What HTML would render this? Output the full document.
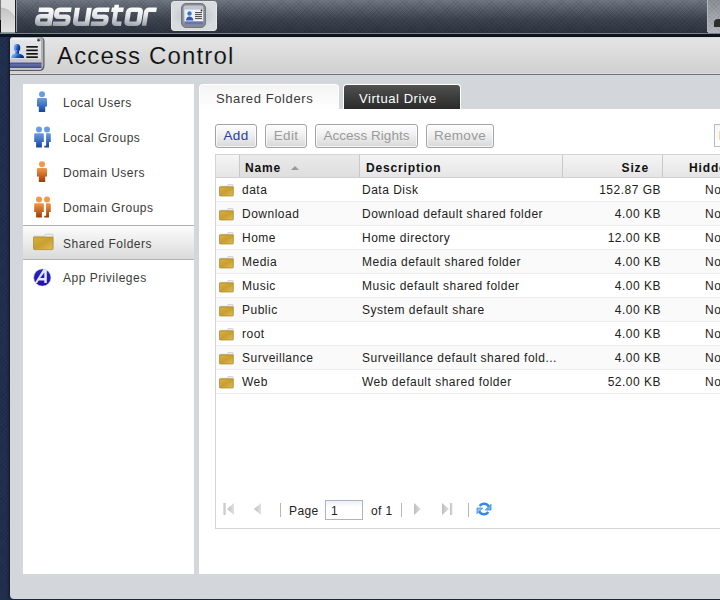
<!DOCTYPE html>
<html><head><meta charset="utf-8">
<style>
*{box-sizing:border-box;margin:0;padding:0}
html,body{width:720px;height:600px;overflow:hidden}
body{position:relative;font-family:"Liberation Sans",sans-serif;font-size:12px;color:#333;
 background:#223150;
 background-image:repeating-linear-gradient(45deg,rgba(0,0,0,.08) 0 1px,transparent 1px 3px),repeating-linear-gradient(-45deg,rgba(0,0,0,.08) 0 1px,transparent 1px 3px);}
.abs{position:absolute}
#topbar{left:0;top:0;width:720px;height:33px;
 background:linear-gradient(#737a86 0,#59606c 9px,#3f4652 19px,#2f3641 32px);}
#topbar:after{content:"";position:absolute;left:0;top:0;right:0;bottom:0;
 background-image:repeating-linear-gradient(45deg,rgba(0,0,0,.07) 0 1px,transparent 1px 3px),repeating-linear-gradient(-45deg,rgba(0,0,0,.07) 0 1px,transparent 1px 3px);}
#tbline{left:0;top:33px;width:720px;height:1px;background:#7b8089}
#tbdark{left:0;top:34px;width:720px;height:3px;background:#0e1522}
#win{left:10px;top:37px;width:720px;height:562px;background:#d3d6da;border-radius:4px 0 0 4px;box-shadow:-1px 0 3px rgba(0,0,0,.55)}
#hdr{left:10px;top:37px;width:710px;height:39px;background:linear-gradient(#d8d8d8,#e4e4e4 2px,#d0d0d0 36px,#dcdcdc 36px,#dcdcdc 37px,#727272 37px,#727272 38px,#d3d6da 38px);border-radius:4px 0 0 0}
#hdrline{left:10px;top:75px;width:710px;height:1px;background:#eef0f2}
#title{left:57px;top:42px;font-size:24px;color:#111;letter-spacing:1.15px;-webkit-text-stroke:0.15px #dadada}
#side{left:23px;top:84px;width:171px;height:490px;background:#fff}
.nav{position:absolute;left:0;width:171px;height:35px}
.nav span{position:absolute;left:40px;top:12px;font-size:12px;color:#3a3a3a;letter-spacing:0.5px}
.nav.sel{background:linear-gradient(#fbfbfb,#ececec 50%,#dadada);border-top:1px solid #b0b0b0;border-bottom:1px solid #b4b4b4}
#content{left:199px;top:84px;width:521px;height:490px;background:#fff}
#tabbar{left:199px;top:84px;width:521px;height:25px;background:#d3d6da}
#tab1{left:199px;top:84px;width:140px;height:26px;background:linear-gradient(#f4f4f4,#fff);border:1px solid #fff;border-bottom:none;border-radius:4px 4px 0 0}
#tab1 span{position:absolute;left:16px;top:6px;font-size:13px;color:#3a3a3a;letter-spacing:0.6px}
#tab2{left:343px;top:84px;width:118px;height:25px;background:linear-gradient(#505050,#2a2a2a);border:1px solid #fff;border-bottom:none;border-radius:4px 4px 0 0}
#tab2 span{position:absolute;left:15px;top:6px;font-size:13px;color:#fff;letter-spacing:0.55px}
.btn{position:absolute;top:124px;height:24px;border:1px solid #a4a4a4;border-radius:3px;background:linear-gradient(#fdfdfd,#f2f2f2 40%,#d8d8d8);font-size:13.5px;color:#9a9a9a;text-align:center;line-height:22px;letter-spacing:0.3px;box-shadow:inset 0 0 0 1px rgba(255,255,255,.7)}
#grid{left:215px;top:154px;width:520px;height:375px;border:1px solid #d4d4d4;background:#fff}
#ghead{left:216px;top:155px;width:520px;height:23px;background:linear-gradient(#f4f4f4,#e4e4e4);border-bottom:1px solid #d0d0d0}
.gh{position:absolute;top:0;height:21px;font-weight:bold;font-size:12px;color:#111;line-height:22px;letter-spacing:0.3px}
.row{position:absolute;left:216px;width:520px;height:24px;border-bottom:1px solid #ececec}
.row span{position:absolute;top:5px;font-size:12px;color:#222;letter-spacing:0.5px;white-space:nowrap}
.fold{position:absolute;left:3px;top:6px}

.gcol{position:absolute;top:0;height:22px;border-right:1px solid #c8c8c8;box-shadow:1px 0 0 #fafafa;background:linear-gradient(#f5f5f5,#e5e5e5)}
.gcol.sorted{background:linear-gradient(#e9e9e9,#dedede)}
.gcol b{position:absolute;top:0;line-height:26px;font-size:12px;color:#111;letter-spacing:0.85px;white-space:nowrap}
.sarrow{position:absolute;left:51px;top:11px;width:0;height:0;border-left:4px solid transparent;border-right:4px solid transparent;border-bottom:4px solid #999}
.row .c1{left:26px}
.row .c2{left:146px}
.row .c3{right:75px;text-align:right}
.row .c4{left:489px}
</style></head><body>
<div id="topbar" class="abs"></div>
<div class="abs" style="left:0;top:0;width:1px;height:32px;background:#222"></div>
<svg class="abs" style="left:0;top:0" width="16" height="33" viewBox="0 0 16 33">
 <defs><linearGradient id="tl" x1="0" y1="0" x2="0" y2="1"><stop offset="0" stop-color="#c4c4c4"/><stop offset="0.5" stop-color="#d4d4d4"/><stop offset="1" stop-color="#e2e2e2"/></linearGradient></defs>
 <rect x="0" y="0" width="1" height="20" fill="#7c7c7c"/>
 <rect x="1" y="0" width="14" height="32" fill="#e4e4e4"/>
 <path d="M1 8 Q11 9 14.5 18 V32 H1 Z" fill="url(#tl)"/>
 <path d="M1 8 Q11 9 14.5 18" stroke="#b8b8b8" stroke-width="0.8" fill="none"/>
 <rect x="1" y="32" width="14" height="1" fill="#8aa0a4"/>
</svg>
<div class="abs" style="left:0;top:20px;width:1px;height:12px;background:#111"></div>
<div class="abs" style="left:15px;top:0;width:1px;height:32px;background:#1e2228"></div>
<div class="abs" style="left:16px;top:0;width:1px;height:32px;background:#9aa0a8"></div>
<svg class="abs" style="left:30px;top:3px" width="130" height="28" viewBox="0 0 130 28">
 <defs><linearGradient id="lg" gradientUnits="userSpaceOnUse" x1="4" y1="-19" x2="0" y2="1"><stop offset="0" stop-color="#ffffff"/><stop offset="0.45" stop-color="#e2e4e8"/><stop offset="1" stop-color="#8e939c"/></linearGradient></defs>
 <g fill="none" stroke="url(#lg)" stroke-width="4.5" stroke-linejoin="round">
 <path transform="translate(4.5,22.8) skewX(-9) scale(1.12,1)" d="M1.5 -16 H10.5 Q13 -16 13 -13.5 V0 M13 -9.5 H4.5 Q2 -9.5 2 -7 V-4.5 Q2 -2 4.5 -2 H13"/>
 <path transform="translate(22.5,22.8) skewX(-9) scale(1.12,1)" d="M14.5 -16 H4.5 Q2 -16 2 -13.5 V-11.5 Q2 -9 4.5 -9 H10.5 Q13 -9 13 -6.5 V-4.5 Q13 -2 10.5 -2 H0"/>
 <path transform="translate(42.5,22.8) skewX(-9) scale(1.08,1)" d="M2 -18 V-4.5 Q2 -2 4.5 -2 H13 M13 -18 V0"/>
 <path transform="translate(60.5,22.8) skewX(-9) scale(1.12,1)" d="M14.5 -16 H4.5 Q2 -16 2 -13.5 V-11.5 Q2 -9 4.5 -9 H10.5 Q13 -9 13 -6.5 V-4.5 Q13 -2 10.5 -2 H0"/>
 <path transform="translate(79,22.8) skewX(-9) scale(1.0,1)" d="M4.5 -21 V-4.5 Q4.5 -2 7 -2 H12 M0 -16 H12"/>
 <path transform="translate(94,22.8) skewX(-9) scale(1.1,1)" d="M4.5 -16 H10.5 Q13 -16 13 -13.5 V-4.5 Q13 -2 10.5 -2 H4.5 Q2 -2 2 -4.5 V-13.5 Q2 -16 4.5 -16 Z"/>
 <path transform="translate(112,22.8) skewX(-9) scale(1.0,1)" d="M2 0 V-13.5 Q2 -16 4.5 -16 H12"/>
 </g>
</svg>
<div class="abs" style="left:171px;top:1px;width:46px;height:30px;border-radius:3px;background:radial-gradient(ellipse 22px 13px at 50% 50%,#a8c4d8,#cdd3d8 75%,#d8dcdf);border:1px solid #e4e6e8"></div>
<svg class="abs" style="left:181px;top:3px" width="25" height="25" viewBox="0 0 25 25">
 <defs><linearGradient id="ab" x1="0" y1="0" x2="0" y2="1"><stop offset="0" stop-color="#c4c8d6"/><stop offset="1" stop-color="#9aa0b8"/></linearGradient></defs>
 <rect x="0.5" y="0.5" width="24" height="24" rx="4.5" fill="#868a90" stroke="#74787e"/>
 <rect x="2.5" y="2.5" width="20" height="19" rx="2.5" fill="url(#ab)"/>
 <rect x="3.5" y="6.5" width="18.5" height="12" fill="#f0f0f2"/>
 <rect x="3.5" y="18.5" width="18.5" height="3" fill="#6674b0"/>
 <circle cx="8.5" cy="10.5" r="2.2" fill="#3c7ad0"/>
 <path d="M5 17.5 Q5.3 13.5 8.5 13.5 Q11.7 13.5 12.5 17.5 Z" fill="#2a5cb8"/>
 <g fill="#555"><rect x="14" y="9" width="7" height="1.1"/><rect x="14" y="11" width="7" height="1.1"/><rect x="14" y="13" width="7" height="1.1"/><rect x="14" y="15" width="7" height="1.1"/></g>
 <circle cx="20.5" cy="7.5" r="0.9" fill="#333"/>
</svg>
<div class="abs" style="left:707px;top:0;width:1px;height:32px;background:#b4b8be"></div>
<div class="abs" style="left:708px;top:0;width:12px;height:33px;background:repeating-linear-gradient(45deg,rgba(0,0,0,.06) 0 1px,transparent 1px 3px),repeating-linear-gradient(-45deg,rgba(0,0,0,.06) 0 1px,transparent 1px 3px),linear-gradient(#8e939a,#a4a8ae 50%,#b8bcc2)"></div>
<div class="abs" style="left:714px;top:19px;width:6px;height:8px;background:#2e2e2e;border-radius:4px 0 0 0"></div>
<div id="tbline" class="abs"></div>
<div id="tbdark" class="abs"></div>
<div id="win" class="abs"></div>
<div id="hdr" class="abs"></div>
<div id="title" class="abs">Access Control</div>
<svg class="abs" style="left:10px;top:37px" width="35" height="35" viewBox="0 0 35 35">
 <defs>
  <linearGradient id="card" x1="0" y1="0" x2="0" y2="1"><stop offset="0" stop-color="#f4f5f8"/><stop offset="0.15" stop-color="#e2e4e8"/><stop offset="1" stop-color="#dadce0"/></linearGradient>
  <linearGradient id="pers" x1="0" y1="0" x2="1" y2="0.3"><stop offset="0" stop-color="#8cbaec"/><stop offset="0.45" stop-color="#5090dc"/><stop offset="0.55" stop-color="#2a66c8"/><stop offset="1" stop-color="#0a2888"/></linearGradient>
  <linearGradient id="strip" x1="0" y1="0" x2="0" y2="1"><stop offset="0" stop-color="#3c4480"/><stop offset="0.4" stop-color="#6670a8"/><stop offset="1" stop-color="#3a4488"/></linearGradient>
 </defs>
 <path d="M0 3 Q0 0 3 0 H30 Q34.5 0 34.5 4.5 V28.5 Q34.5 34 29 34 H0 Z" fill="#5a5c60"/>
 <path d="M0 3 Q0 0 3 0 H29.5 Q33.3 0 33.3 3.8 V28 Q33.3 33 28.3 33 H0 Z" fill="#b0b2b8"/>
 <path d="M0 3.5 Q0 1 3 1 H27 L31 4 V22 H0 Z" fill="url(#card)"/>
 <rect x="0" y="22" width="31.5" height="3.6" fill="#c6c8cc"/>
 <rect x="0" y="25.6" width="31.5" height="5.4" fill="url(#strip)"/>
 <rect x="0" y="31" width="31" height="1.5" fill="#c4c6cc"/>
 <ellipse cx="7" cy="11" rx="3.6" ry="4" fill="#eef0f4" opacity="0.9"/>
 <ellipse cx="7" cy="10.9" rx="3.3" ry="3.8" fill="url(#pers)"/>
 <rect x="5" y="13" width="4" height="4" fill="url(#pers)"/>
 <path d="M1.2 21 C1.6 17.6 3.6 16.6 6.8 16.6 C10.4 16.6 13.6 17.6 14.2 21 Z" fill="url(#pers)"/>
 <g fill="#151515"><rect x="16.3" y="9" width="11.5" height="1.7"/><rect x="16.3" y="12.5" width="11.5" height="1.7"/><rect x="16.3" y="16" width="11.5" height="1.7"/><rect x="16.3" y="19.3" width="11.5" height="1.7"/></g>
 <path d="M27 1 L31 4 L28 4 Z" fill="#8c8e92"/>
 <circle cx="28.5" cy="3.3" r="1.2" fill="#3a3a3a"/>
</svg>
<div id="side" class="abs">
 <div class="nav" style="top:0"><span>Local Users</span></div>
 <div class="nav" style="top:35px"><span>Local Groups</span></div>
 <div class="nav" style="top:70px"><span>Domain Users</span></div>
 <div class="nav" style="top:105px"><span>Domain Groups</span></div>
 <div class="nav sel" style="top:141px"><span style="top:11px">Shared Folders</span></div>
 <div class="nav" style="top:175px"><span>App Privileges</span></div>
</div>
<svg class="abs" style="left:35px;top:91px" width="14" height="22" viewBox="0 0 14 22"><defs><linearGradient id="gu1" x1="0" y1="0" x2="0" y2="1"><stop offset="0" stop-color="#6a9de0"/><stop offset="1" stop-color="#17449e"/></linearGradient></defs>
 <circle cx="7" cy="3.3" r="3" fill="#6a9de0"/>
 <path d="M3.4 7 H10.6 Q12 7 12 8.4 V15.5 H10.2 V21 H3.8 V15.5 H2 V8.4 Q2 7 3.4 7 Z" fill="url(#gu1)"/></svg><svg class="abs" style="left:33px;top:126px" width="20" height="22" viewBox="0 0 20 22"><defs><linearGradient id="gg1" x1="0" y1="0" x2="0" y2="1"><stop offset="0" stop-color="#6a9de0"/><stop offset="1" stop-color="#17449e"/></linearGradient></defs>
 <circle cx="6" cy="3.5" r="3" fill="#6a9de0"/><circle cx="14" cy="3.5" r="3" fill="#6a9de0"/>
 <path d="M13.1 7.2 H16.6 Q17.8 7.2 17.8 8.4 V16 H16 V21.5 H11.3 V19.8 H13.1 Z" fill="url(#gg1)"/>
 <path d="M2.4 7.2 H9.6 Q10.8 7.2 10.8 8.4 V16 H8.9 V21.5 H3.1 V16 H1.2 V8.4 Q1.2 7.2 2.4 7.2 Z" fill="url(#gg1)"/></svg><svg class="abs" style="left:35px;top:161px" width="14" height="22" viewBox="0 0 14 22"><defs><linearGradient id="gu2" x1="0" y1="0" x2="0" y2="1"><stop offset="0" stop-color="#f29848"/><stop offset="1" stop-color="#9c3c04"/></linearGradient></defs>
 <circle cx="7" cy="3.3" r="3" fill="#f29848"/>
 <path d="M3.4 7 H10.6 Q12 7 12 8.4 V15.5 H10.2 V21 H3.8 V15.5 H2 V8.4 Q2 7 3.4 7 Z" fill="url(#gu2)"/></svg><svg class="abs" style="left:33px;top:196px" width="20" height="22" viewBox="0 0 20 22"><defs><linearGradient id="gg2" x1="0" y1="0" x2="0" y2="1"><stop offset="0" stop-color="#f29848"/><stop offset="1" stop-color="#9c3c04"/></linearGradient></defs>
 <circle cx="6" cy="3.5" r="3" fill="#f29848"/><circle cx="14" cy="3.5" r="3" fill="#f29848"/>
 <path d="M13.1 7.2 H16.6 Q17.8 7.2 17.8 8.4 V16 H16 V21.5 H11.3 V19.8 H13.1 Z" fill="url(#gg2)"/>
 <path d="M2.4 7.2 H9.6 Q10.8 7.2 10.8 8.4 V16 H8.9 V21.5 H3.1 V16 H1.2 V8.4 Q1.2 7.2 2.4 7.2 Z" fill="url(#gg2)"/></svg><svg class="abs" style="left:33px;top:233px" width="21" height="18" viewBox="0 0 21 18">
 <defs><linearGradient id="fg" x1="0" y1="0" x2="1" y2="1"><stop offset="0" stop-color="#d6b040"/><stop offset="0.5" stop-color="#c9a030"/><stop offset="1" stop-color="#e0bc58"/></linearGradient></defs>
 <path d="M0.8 3.2 H11.5 L12.5 1.2 H19.2 Q20 1.2 20 2 V5 H0.8 Z" fill="#f0f0f0" stroke="#bdbdbd" stroke-width="0.7"/>
 <rect x="0.5" y="4" width="19.6" height="12.6" rx="1" fill="url(#fg)" stroke="#a88428" stroke-width="0.7"/>
</svg>
<svg class="abs" style="left:33px;top:268px" width="19" height="19" viewBox="0 0 19 19">
 <defs><linearGradient id="apg" x1="0" y1="0" x2="0" y2="1"><stop offset="0" stop-color="#1e28c8"/><stop offset="1" stop-color="#2a0ea8"/></linearGradient></defs>
 <circle cx="9.3" cy="9.5" r="8.6" fill="url(#apg)" stroke="#c8cce0" stroke-width="0.5"/>
 <path d="M1.8 15 L10.3 1.2 H13.8 V15 H11.3 V12.4 H5.6 L4.2 15 Z M7.2 10 H11.3 V4.6 Z" fill="#e4e8f2" fill-rule="evenodd"/>
</svg>
<div id="content" class="abs"></div>
<div id="tabbar" class="abs"></div>
<div id="tab1" class="abs"><span>Shared Folders</span></div>
<div id="tab2" class="abs"><span>Virtual Drive</span></div>
<div class="btn" style="left:215px;width:42px;color:#1c3fa0">Add</div>
<div class="btn" style="left:265px;width:42px">Edit</div>
<div class="btn" style="left:315px;width:103px;letter-spacing:0.05px">Access Rights</div>
<div class="btn" style="left:426px;width:68px">Remove</div>
<div id="grid" class="abs"></div>
<div id="ghead" class="abs">
 <div class="gcol" style="left:0;width:24px"></div>
 <div class="gcol sorted" style="left:24px;width:120px"><b style="left:5px">Name</b><i class="sarrow"></i></div>
 <div class="gcol" style="left:144px;width:203px"><b style="left:6px">Description</b></div>
 <div class="gcol" style="left:347px;width:100px"><b style="right:13px">Size</b></div>
 <div class="gcol" style="left:447px;width:100px"><b style="left:26px">Hidden</b></div>
</div>
<div class="row" style="top:178px;background:#fff"><svg class="fold" width="15" height="13" viewBox="0 0 15 13"><path d="M0.7 2.3 H8.2 L9 0.6 H13.6 Q14.3 0.6 14.3 1.3 V3.5 H0.7 Z" fill="#efefef" stroke="#bcbcbc" stroke-width="0.6"/><rect x="0.5" y="2.8" width="13.8" height="9.2" rx="0.8" fill="url(#fg)" stroke="#a88428" stroke-width="0.7"/></svg><span class="c1">data</span><span class="c2">Data Disk</span><span class="c3">152.87 GB</span><span class="c4">No</span></div>
<div class="row" style="top:202px;background:#fafafa"><svg class="fold" width="15" height="13" viewBox="0 0 15 13"><path d="M0.7 2.3 H8.2 L9 0.6 H13.6 Q14.3 0.6 14.3 1.3 V3.5 H0.7 Z" fill="#efefef" stroke="#bcbcbc" stroke-width="0.6"/><rect x="0.5" y="2.8" width="13.8" height="9.2" rx="0.8" fill="url(#fg)" stroke="#a88428" stroke-width="0.7"/></svg><span class="c1">Download</span><span class="c2">Download default shared folder</span><span class="c3">4.00 KB</span><span class="c4">No</span></div>
<div class="row" style="top:226px;background:#fff"><svg class="fold" width="15" height="13" viewBox="0 0 15 13"><path d="M0.7 2.3 H8.2 L9 0.6 H13.6 Q14.3 0.6 14.3 1.3 V3.5 H0.7 Z" fill="#efefef" stroke="#bcbcbc" stroke-width="0.6"/><rect x="0.5" y="2.8" width="13.8" height="9.2" rx="0.8" fill="url(#fg)" stroke="#a88428" stroke-width="0.7"/></svg><span class="c1">Home</span><span class="c2">Home directory</span><span class="c3">12.00 KB</span><span class="c4">No</span></div>
<div class="row" style="top:250px;background:#fafafa"><svg class="fold" width="15" height="13" viewBox="0 0 15 13"><path d="M0.7 2.3 H8.2 L9 0.6 H13.6 Q14.3 0.6 14.3 1.3 V3.5 H0.7 Z" fill="#efefef" stroke="#bcbcbc" stroke-width="0.6"/><rect x="0.5" y="2.8" width="13.8" height="9.2" rx="0.8" fill="url(#fg)" stroke="#a88428" stroke-width="0.7"/></svg><span class="c1">Media</span><span class="c2">Media default shared folder</span><span class="c3">4.00 KB</span><span class="c4">No</span></div>
<div class="row" style="top:274px;background:#fff"><svg class="fold" width="15" height="13" viewBox="0 0 15 13"><path d="M0.7 2.3 H8.2 L9 0.6 H13.6 Q14.3 0.6 14.3 1.3 V3.5 H0.7 Z" fill="#efefef" stroke="#bcbcbc" stroke-width="0.6"/><rect x="0.5" y="2.8" width="13.8" height="9.2" rx="0.8" fill="url(#fg)" stroke="#a88428" stroke-width="0.7"/></svg><span class="c1">Music</span><span class="c2">Music default shared folder</span><span class="c3">4.00 KB</span><span class="c4">No</span></div>
<div class="row" style="top:298px;background:#fafafa"><svg class="fold" width="15" height="13" viewBox="0 0 15 13"><path d="M0.7 2.3 H8.2 L9 0.6 H13.6 Q14.3 0.6 14.3 1.3 V3.5 H0.7 Z" fill="#efefef" stroke="#bcbcbc" stroke-width="0.6"/><rect x="0.5" y="2.8" width="13.8" height="9.2" rx="0.8" fill="url(#fg)" stroke="#a88428" stroke-width="0.7"/></svg><span class="c1">Public</span><span class="c2">System default share</span><span class="c3">4.00 KB</span><span class="c4">No</span></div>
<div class="row" style="top:322px;background:#fff"><svg class="fold" width="15" height="13" viewBox="0 0 15 13"><path d="M0.7 2.3 H8.2 L9 0.6 H13.6 Q14.3 0.6 14.3 1.3 V3.5 H0.7 Z" fill="#efefef" stroke="#bcbcbc" stroke-width="0.6"/><rect x="0.5" y="2.8" width="13.8" height="9.2" rx="0.8" fill="url(#fg)" stroke="#a88428" stroke-width="0.7"/></svg><span class="c1">root</span><span class="c2"></span><span class="c3">4.00 KB</span><span class="c4">No</span></div>
<div class="row" style="top:346px;background:#fafafa"><svg class="fold" width="15" height="13" viewBox="0 0 15 13"><path d="M0.7 2.3 H8.2 L9 0.6 H13.6 Q14.3 0.6 14.3 1.3 V3.5 H0.7 Z" fill="#efefef" stroke="#bcbcbc" stroke-width="0.6"/><rect x="0.5" y="2.8" width="13.8" height="9.2" rx="0.8" fill="url(#fg)" stroke="#a88428" stroke-width="0.7"/></svg><span class="c1">Surveillance</span><span class="c2">Surveillance default shared fold...</span><span class="c3">4.00 KB</span><span class="c4">No</span></div>
<div class="row" style="top:370px;background:#fff"><svg class="fold" width="15" height="13" viewBox="0 0 15 13"><path d="M0.7 2.3 H8.2 L9 0.6 H13.6 Q14.3 0.6 14.3 1.3 V3.5 H0.7 Z" fill="#efefef" stroke="#bcbcbc" stroke-width="0.6"/><rect x="0.5" y="2.8" width="13.8" height="9.2" rx="0.8" fill="url(#fg)" stroke="#a88428" stroke-width="0.7"/></svg><span class="c1">Web</span><span class="c2">Web default shared folder</span><span class="c3">52.00 KB</span><span class="c4">No</span></div>
<svg class="abs" style="left:222px;top:502px" width="14" height="14" viewBox="0 0 14 14"><defs><linearGradient id="pg" x1="0" y1="0" x2="1" y2="0"><stop offset="0" stop-color="#bdbdbd"/><stop offset="1" stop-color="#e2e2e2"/></linearGradient></defs><rect x="1.5" y="1" width="2.5" height="12" fill="url(#pg)"/><path d="M12 1 L5 7 L12 13 Z" fill="url(#pg)"/></svg>
<svg class="abs" style="left:252px;top:502px" width="12" height="14" viewBox="0 0 12 14"><path d="M9 1 L2 7 L9 13 Z" fill="url(#pg)"/></svg>
<div class="abs" style="left:280px;top:503px;width:1px;height:14px;background:#bdb6a8"></div>
<div class="abs" style="left:289px;top:504px;font-size:12px;color:#222;letter-spacing:0.4px">Page</div>
<div class="abs" style="left:325px;top:500px;width:38px;height:20px;border:1px solid #a9b3cc;background:#fff;font-size:12px;color:#222;padding:3px 0 0 5px;background:linear-gradient(#eef0f2,#fff 6px)">1</div>
<div class="abs" style="left:371px;top:504px;font-size:12px;color:#222;letter-spacing:0.4px">of 1</div>
<div class="abs" style="left:401px;top:503px;width:1px;height:14px;background:#bdb6a8"></div>
<svg class="abs" style="left:411px;top:502px" width="12" height="14" viewBox="0 0 12 14"><path d="M3 1 L10 7 L3 13 Z" fill="url(#pg)"/></svg>
<svg class="abs" style="left:440px;top:502px" width="14" height="14" viewBox="0 0 14 14"><path d="M2 1 L9 7 L2 13 Z" fill="url(#pg)"/><rect x="10" y="1" width="2.5" height="12" fill="url(#pg)"/></svg>
<div class="abs" style="left:468px;top:503px;width:1px;height:14px;background:#bdb6a8"></div>
<svg class="abs" style="left:476px;top:501px" width="17" height="16" viewBox="0 0 17 16">
 <path d="M3.66 4.96 A5.3 5.3 0 0 1 12.98 6.19" stroke="#3a88e4" stroke-width="2.5" fill="none"/>
 <path d="M15 3.3 L15 9 L9.3 9 Z" fill="#6ab4f6" stroke="#3a88e4" stroke-width="0.8" stroke-linejoin="round"/>
 <path d="M12.34 11.04 A5.3 5.3 0 0 1 3.02 9.81" stroke="#3a88e4" stroke-width="2.5" fill="none"/>
 <path d="M1 12.7 L1 7 L6.7 7 Z" fill="#8ac4f8" stroke="#3a88e4" stroke-width="0.8" stroke-linejoin="round"/>
</svg>
<div class="abs" style="left:714px;top:124px;width:10px;height:23px;border:1px solid #b4b8c8;background:linear-gradient(#f4f6f8,#fff)"></div>
<div class="abs" style="left:719px;top:131px;width:2px;height:9px;background:#f8d8a0"></div>
</body></html>
